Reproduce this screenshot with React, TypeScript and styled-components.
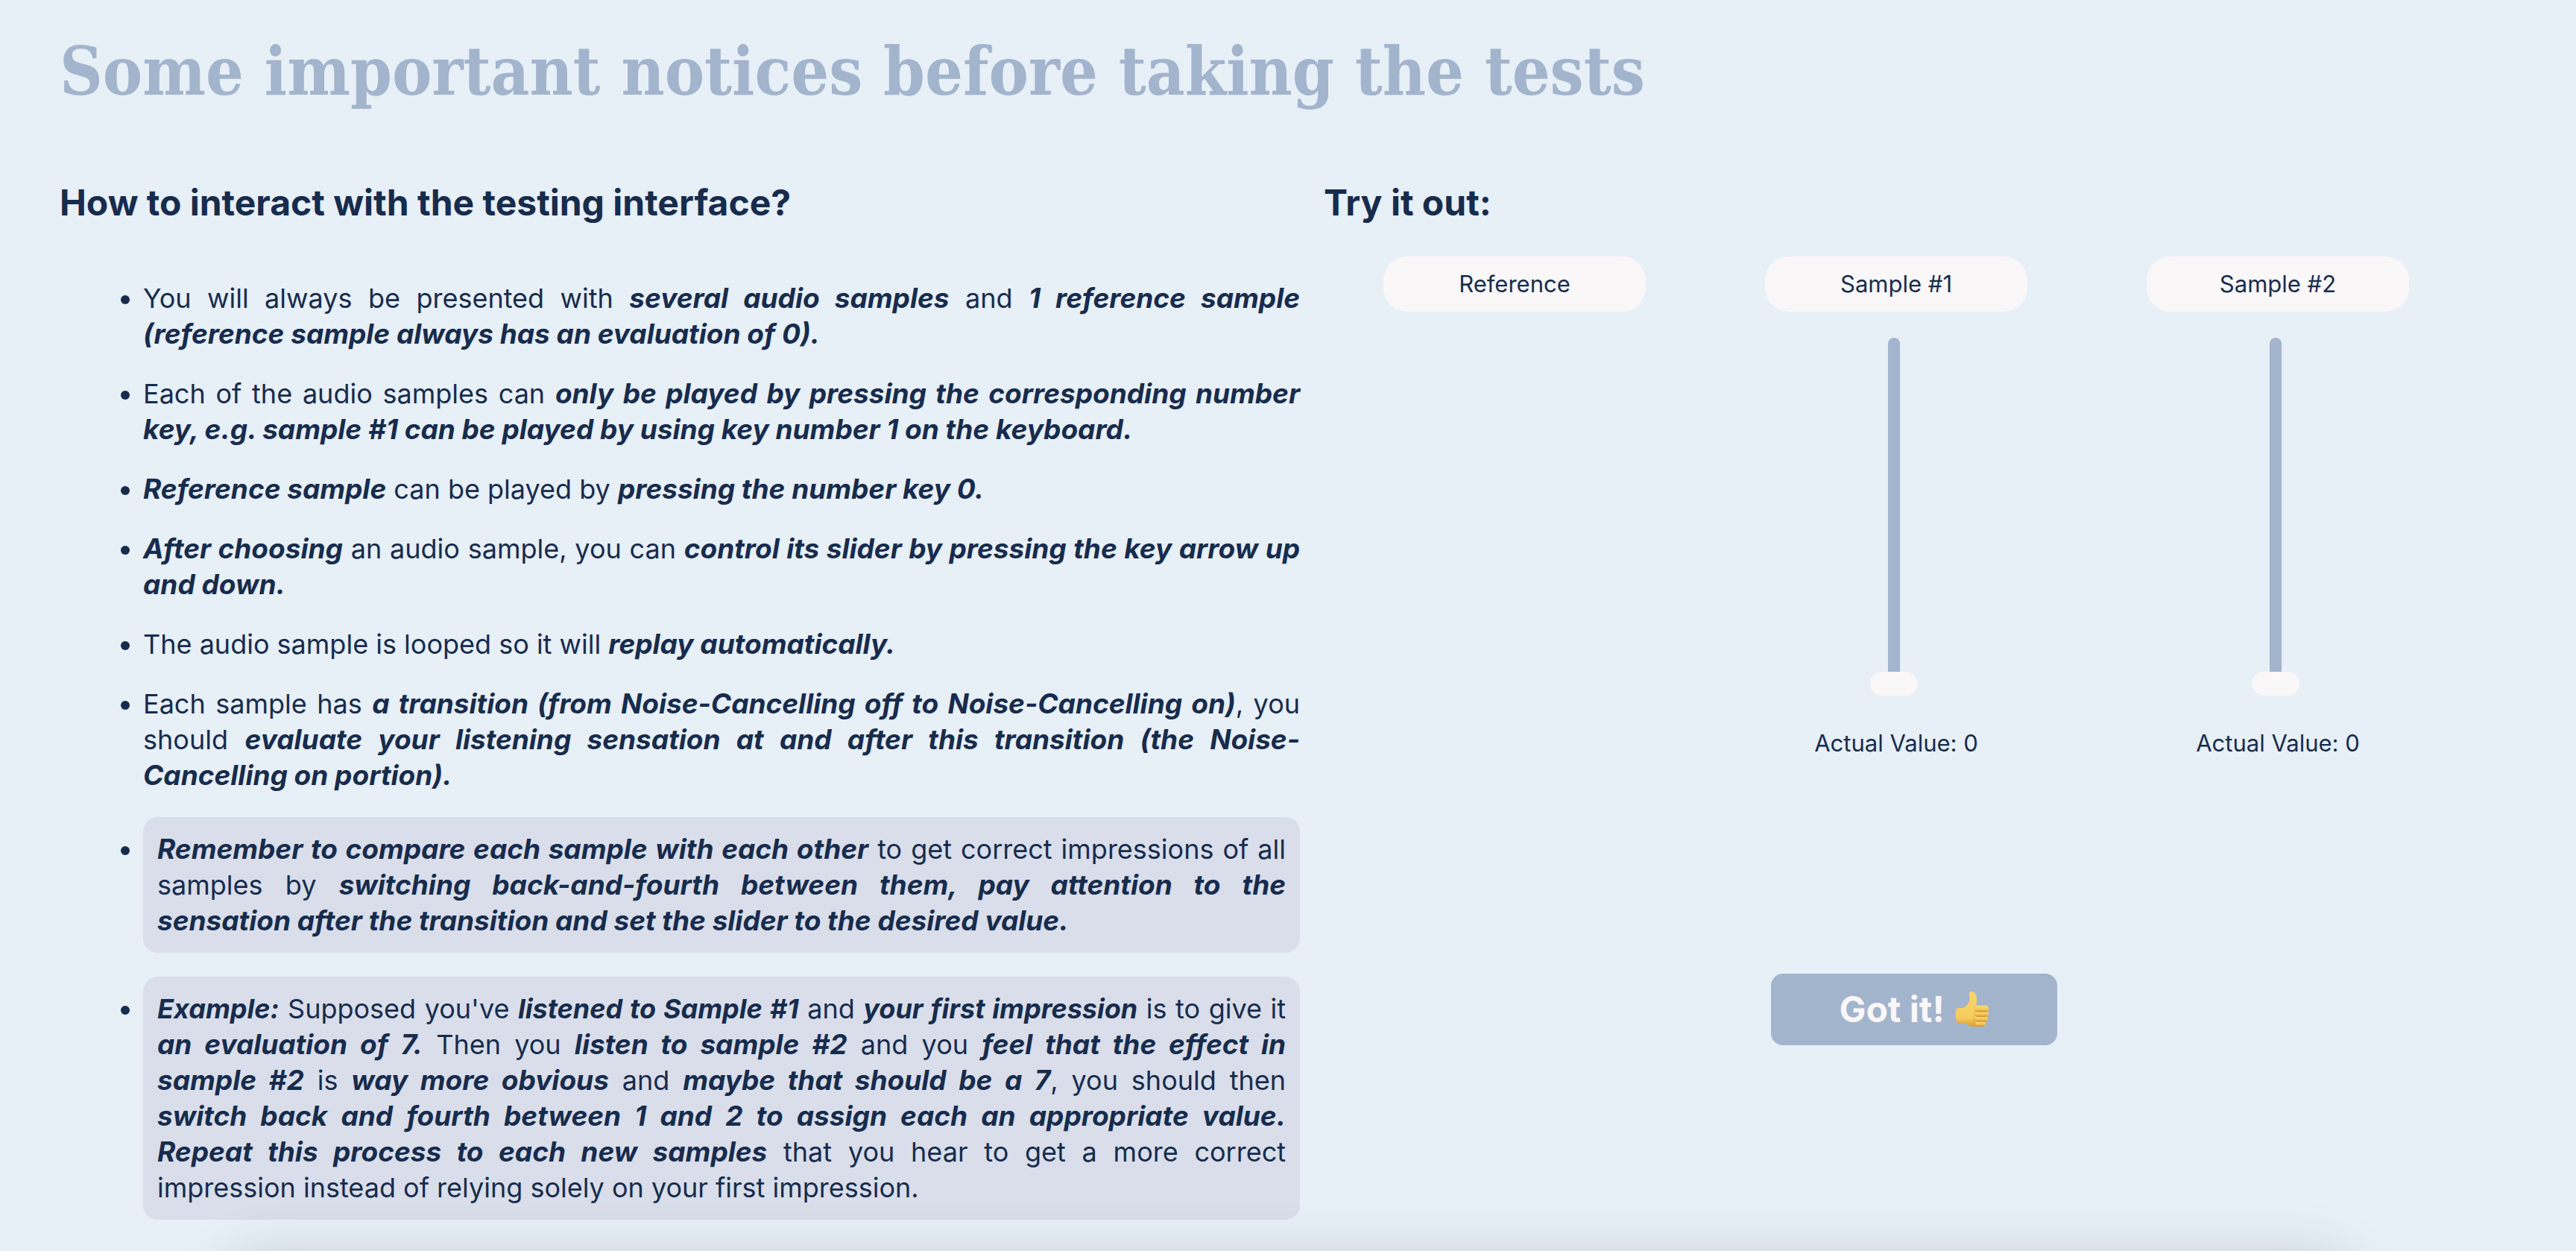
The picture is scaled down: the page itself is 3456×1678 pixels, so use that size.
import React, { useState } from "react";
import styled, { createGlobalStyle } from "styled-components";

const color = {
  page: "#e7eff7",
  accent: "#a3b4cd",
  ink: "#172c4d",
  light: "#faf7f8",
  note: "#d9deea",
};

const GlobalStyle = createGlobalStyle`
  * { box-sizing: border-box; }
  body {
    margin: 0;
    background: ${color.page};
    color: ${color.ink};
    font-family: Inter, "Liberation Sans", sans-serif;
  }
`;

const Page = styled.main`
  padding: 32px 96px 40px 80px;
`;

const Title = styled.h1`
  margin: 0 0 80px;
  color: ${color.accent};
  font: 700 89px/128px "DejaVu Serif Condensed", "DejaVu Serif", serif;
`;

const Columns = styled.div`
  display: grid;
  grid-template-columns: 1664fr 1584fr;
  column-gap: 32px;
`;

const Heading = styled.h2`
  margin: 0;
  font-size: 48px;
  font-weight: 700;
  line-height: 64px;
`;

const Notices = styled.ul`
  display: flex;
  flex-direction: column;
  gap: 32px;
  margin: 72px 0 0;
  padding: 0 0 0 112px;
  font-size: 36px;
  line-height: 48px;
  text-align: justify;
`;

const Notice = styled.li`
  list-style: disc outside;
`;

const Highlight = styled.div`
  padding: 19px;
  border-radius: 20px;
  background: ${color.note};
`;

const Strong = styled.strong<{ $compact?: boolean }>`
  font-size: ${(props) => (props.$compact ? "36px" : "37px")};
  font-style: italic;
  font-weight: 700;
  line-height: 1;
`;

const TryOut = styled.section`
  display: flex;
  flex-direction: column;
`;

const Samples = styled.div`
  display: grid;
  grid-template-columns: repeat(3, 1fr);
  margin-top: 40px;
  padding-right: 48px;
`;

const Sample = styled.div`
  display: flex;
  flex-direction: column;
  align-items: center;
  font-size: 31px;
  line-height: 42px;
`;

const SampleButton = styled.button`
  width: 352px;
  padding: 16px;
  border: 0;
  border-radius: 32px;
  background: ${color.light};
  color: inherit;
  font: inherit;
  cursor: pointer;
`;

const Slider = styled.input`
  appearance: none;
  writing-mode: vertical-lr;
  direction: rtl;
  width: 16px;
  height: 480px;
  margin: 35px 6px 43px 0;
  border-radius: 8px;
  background: ${color.accent};

  &::-webkit-slider-thumb {
    appearance: none;
    width: 64px;
    height: 32px;
    border: 0;
    border-radius: 16px;
    background: ${color.light};
  }
`;

const Confirm = styled.button`
  display: flex;
  align-items: center;
  justify-content: center;
  align-self: center;
  gap: 14px;
  width: 384px;
  height: 96px;
  margin-top: 288px;
  border: 0;
  border-radius: 16px;
  background: ${color.accent};
  color: ${color.light};
  font: 700 48px/64px Inter, "Liberation Sans", sans-serif;
  cursor: pointer;
`;

const BottomPanel = styled.div`
  position: fixed;
  top: 100%;
  left: 9%;
  right: 9%;
  height: 200px;
  margin-top: 8px;
  border-radius: 20px;
  box-shadow: 0 0 80px rgba(0, 0, 0, 0.14);
  pointer-events: none;
`;

function ThumbsUp() {
  return (
    <svg width="46" height="50" viewBox="0 0 46 50" aria-hidden="true">
      <defs>
        <linearGradient id="skin" x1="0" y1="0" x2="0" y2="1">
          <stop offset="0" stopColor="#f9d66b" />
          <stop offset="0.75" stopColor="#f6cd5b" />
          <stop offset="1" stopColor="#dd9a35" />
        </linearGradient>
        <linearGradient id="finger" x1="0" y1="0" x2="0" y2="1">
          <stop offset="0" stopColor="#fbdc78" />
          <stop offset="0.6" stopColor="#f5ca55" />
          <stop offset="1" stopColor="#cf8a34" />
        </linearGradient>
      </defs>
      <path
        d="M2 24C5 22 10 24 13 22C17 19 20 14 19.500 9C19 5 18 3 20 1.500C23 0 27 2 28.500 7C30 12 28 17 28.500 21L33 23L36 46C32 49 25 48 20 47C16 46 14 43 11 43C8 43 5 46 3 43C0 38 0 28 2 24Z"
        fill="url(#skin)"
      />
      <path d="M27 21C25 25 28 28 26 32C25 36 27 40 27 46" fill="none" stroke="#d69b3a" strokeWidth="1" opacity="0.8" />
      <rect x="27" y="39.500" width="14" height="8.500" rx="4.200" fill="url(#finger)" />
      <rect x="26.500" y="33" width="17.500" height="8.500" rx="4.200" fill="url(#finger)" />
      <rect x="26" y="26.500" width="19" height="8.500" rx="4.200" fill="url(#finger)" />
      <rect x="26" y="19.500" width="19" height="9" rx="4.500" fill="url(#finger)" />
    </svg>
  );
}

function RatedSample({ number }: { number: number }) {
  const [value, setValue] = useState(0);
  const id = `sample-${number}`;
  return (
    <Sample>
      <SampleButton type="button">Sample #{number}</SampleButton>
      <Slider
        id={id}
        type="range"
        min={0}
        max={10}
        value={value}
        onChange={(event) => setValue(Number(event.target.value))}
      />
      <label htmlFor={id}>Actual Value: {value}</label>
    </Sample>
  );
}

export default function App() {
  return (
    <>
      <GlobalStyle />
      <Page>
        <Title>Some important notices before taking the tests</Title>
        <Columns>
          <section>
            <Heading>How to interact with the testing interface?</Heading>
            <Notices>
              <Notice>
                You will always be presented with <Strong>several audio samples</Strong> and{" "}
                <Strong>1 reference sample (reference sample always has an evaluation of 0).</Strong>
              </Notice>
              <Notice>
                Each of the audio samples can{" "}
                <Strong>
                  only be played by pressing the corresponding number key, e.g. sample #1 can be played by using key
                  number 1 on the keyboard.
                </Strong>
              </Notice>
              <Notice>
                <Strong>Reference sample</Strong> can be played by <Strong>pressing the number key 0.</Strong>
              </Notice>
              <Notice>
                <Strong>After choosing</Strong> an audio sample, you can{" "}
                <Strong>control its slider by pressing the key arrow up and down.</Strong>
              </Notice>
              <Notice>
                The audio sample is looped so it will <Strong>replay automatically.</Strong>
              </Notice>
              <Notice>
                Each sample has <Strong>a transition (from Noise-Cancelling off to Noise-Cancelling on)</Strong>, you
                should{" "}
                <Strong>
                  evaluate your listening sensation at and after this transition (the Noise-Cancelling on portion).
                </Strong>
              </Notice>
              <Notice>
                <Highlight>
                  <Strong>Remember to compare each sample with each other</Strong> to get correct impressions of all
                  samples by{" "}
                  <Strong>
                    switching back-and-fourth between them, pay attention to the sensation after the transition and set
                    the slider to the desired value.
                  </Strong>
                </Highlight>
              </Notice>
              <Notice>
                <Highlight>
                  <Strong $compact>Example:</Strong> Supposed you've <Strong $compact>listened to Sample #1</Strong> and{" "}
                  <Strong $compact>your first impression</Strong> is to give it <Strong>an evaluation of 7.</Strong> Then
                  you <Strong>listen to sample #2</Strong> and you <Strong>feel that the effect in sample #2</Strong> is{" "}
                  <Strong>way more obvious</Strong> and <Strong>maybe that should be a 7</Strong>, you should then{" "}
                  <Strong>
                    switch back and fourth between 1 and 2 to assign each an appropriate value. Repeat this process to
                    each new samples
                  </Strong>{" "}
                  that you hear to get a more correct impression instead of relying solely on your first impression.
                </Highlight>
              </Notice>
            </Notices>
          </section>
          <TryOut>
            <Heading>Try it out:</Heading>
            <Samples>
              <Sample>
                <SampleButton type="button">Reference</SampleButton>
              </Sample>
              <RatedSample number={1} />
              <RatedSample number={2} />
            </Samples>
            <Confirm type="button">
              Got it! <ThumbsUp />
            </Confirm>
          </TryOut>
        </Columns>
      </Page>
      <BottomPanel />
    </>
  );
}
